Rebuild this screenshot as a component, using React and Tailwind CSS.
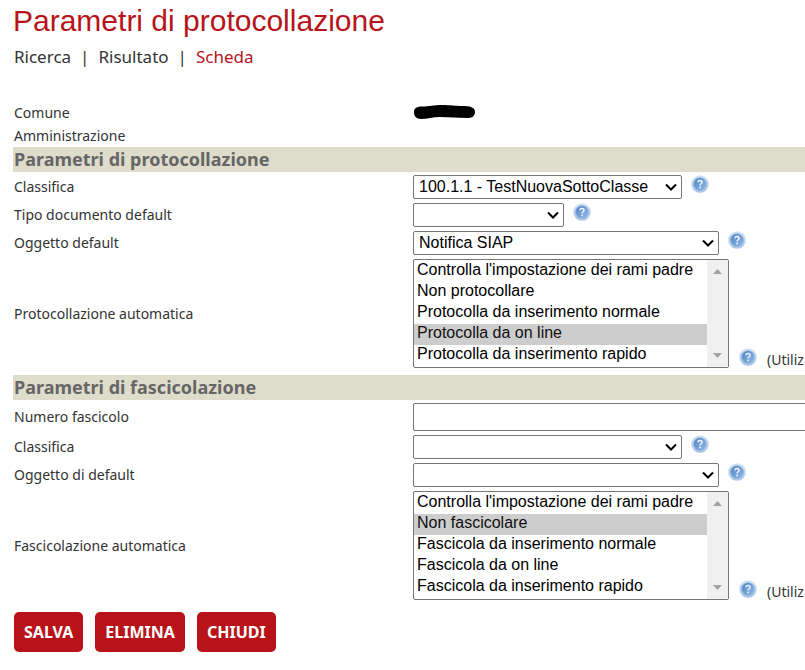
import React from "react";

const AUTO_PROTOCOLLO = [
  "Controlla l'impostazione dei rami padre",
  "Non protocollare",
  "Protocolla da inserimento normale",
  "Protocolla da on line",
  "Protocolla da inserimento rapido",
];

const AUTO_FASCICOLO = [
  "Controlla l'impostazione dei rami padre",
  "Non fascicolare",
  "Fascicola da inserimento normale",
  "Fascicola da on line",
  "Fascicola da inserimento rapido",
];

function HelpIcon() {
  return (
    <svg className="h-[18px] w-[18px] shrink-0" viewBox="0 0 18 18" role="img" aria-label="Aiuto">
      <defs>
        <linearGradient id="helpRing" x1="0" y1="0" x2="0" y2="1">
          <stop offset="0" stopColor="#d6e4f5" />
          <stop offset="1" stopColor="#a9c4e6" />
        </linearGradient>
        <linearGradient id="helpDisc" x1="0" y1="0" x2="1" y2="1">
          <stop offset="0" stopColor="#4f83c2" />
          <stop offset="1" stopColor="#92bce6" />
        </linearGradient>
      </defs>
      <circle cx="9" cy="9" r="8.8" fill="url(#helpRing)" />
      <circle cx="9" cy="9" r="6.3" fill="url(#helpDisc)" stroke="#7ba4d6" strokeWidth="0.6" />
      <path d="M7 7.300C7 4.800 11.100 4.800 11.100 7.200C11.100 8.700 9.100 8.800 9.100 10.400" fill="none" stroke="#f4f8fd" strokeWidth="1.5" />
      <circle cx="9.1" cy="12.4" r="0.9" fill="#f4f8fd" />
    </svg>
  );
}

function Row({ id, label, children }) {
  return (
    <div className="flex min-h-7 items-center py-0.5">
      <div className="w-[400px] shrink-0 pl-px">
        <label htmlFor={id}>{label}</label>
      </div>
      <div className="flex min-w-0 flex-1">{children}</div>
    </div>
  );
}

function SelectRow({ id, label, width, value }) {
  return (
    <Row id={id} label={label}>
      <div className="flex items-start gap-[9px]">
        <div className="relative">
          <select
            id={id}
            defaultValue={value}
            className={`block h-6 appearance-none rounded-xs border border-[#767676] bg-white pr-6 pb-px pl-[5px] font-['Liberation_Sans',Arial,sans-serif] text-base leading-5 text-black ${width}`}
          >
            <option value={value}>{value}</option>
          </select>
          <svg className="pointer-events-none absolute top-2 right-[5px] h-2 w-3" viewBox="0 0 12 8" aria-hidden="true">
            <path d="M1 1.500L6 6.500L11 1.500" fill="none" stroke="#000" strokeWidth="2" />
          </svg>
        </div>
        <HelpIcon />
      </div>
    </Row>
  );
}

function ListRow({ id, label, options, value }) {
  return (
    <Row id={id} label={label}>
      <div className="flex items-end gap-2.5">
        <div className="relative">
          <select
            id={id}
            size={5}
            defaultValue={value}
            className="block h-[109px] w-[316px] overflow-hidden rounded-xs border border-[#767676] bg-white px-0 pt-px pb-0 font-['Liberation_Sans',Arial,sans-serif] text-base text-black"
          >
            {options.map((o) => (
              <option
                key={o}
                value={o}
                className="h-[21px] min-h-0 px-[3px] py-0 leading-[20px] checked:bg-[#cdcdcd] checked:bg-linear-to-r checked:from-[#cdcdcd] checked:to-[#cdcdcd]"
              >
                {o}
              </option>
            ))}
          </select>
          <div className="pointer-events-none absolute inset-y-px right-px flex w-[21px] flex-col items-center justify-between bg-[#f0f0f0] py-[9px]">
            <svg className="h-[5px] w-[9px]" viewBox="0 0 9 5" aria-hidden="true">
              <path d="M0 5L4.500 0L9 5Z" fill="#a3a3a3" />
            </svg>
            <svg className="h-[5px] w-[9px]" viewBox="0 0 9 5" aria-hidden="true">
              <path d="M0 0L4.500 5L9 0Z" fill="#a3a3a3" />
            </svg>
          </div>
        </div>
        <div className="flex items-start gap-2.5">
          <HelpIcon />
          <span className="pt-1 leading-4 whitespace-nowrap">(Utiliz</span>
        </div>
      </div>
    </Row>
  );
}

function SectionTitle({ children }) {
  return (
    <h2 className="mb-px bg-[#deddcb] pl-px text-lg leading-[25px] font-bold text-[#666]">{children}</h2>
  );
}

function ActionButton({ children }) {
  return (
    <button type="button" className="h-10 rounded-[5px] bg-[#b71319] px-2.5 text-base font-bold text-white">
      {children}
    </button>
  );
}

export default function App() {
  return (
    <main className="min-h-screen overflow-hidden bg-white pl-[13px] font-['Noto_Sans',Tahoma,sans-serif] text-sm text-[#333]">
      <h1 className="pt-0.5 font-['Liberation_Sans',Arial,sans-serif] text-[30px] leading-[38px] text-[#b71319]">
        Parametri di protocollazione
      </h1>
      <nav className="flex gap-[9px] pt-1 pl-px text-[17px] leading-[26px]">
        <a href="#ricerca">Ricerca</a>
        <span>|</span>
        <a href="#risultato">Risultato</a>
        <span>|</span>
        <a href="#scheda" className="text-[#b71319]">Scheda</a>
      </nav>

      <dl className="pt-[31px] leading-[23px]">
        <div className="flex">
          <dt className="w-[400px] shrink-0 pl-px">Comune</dt>
          <dd>
            <svg className="mt-[3px] h-4 w-16" viewBox="0 0 64 16" aria-hidden="true">
              <path d="M1 8C1 4 4 2.500 9 2.500C16 2.500 21 1 29 1C38 1 42 2 49 2C57 2 62 3 62 8C62 13 58 14 54 14C45 14 36 13 27 13C20 13 14 15 8 15C3 15 1 12 1 8Z" fill="#000" />
            </svg>
          </dd>
        </div>
        <div className="flex">
          <dt className="w-[400px] shrink-0 pl-px">Amministrazione</dt>
          <dd />
        </div>
      </dl>

      <form onSubmit={(e) => e.preventDefault()}>
        <section className="pb-[5px]">
          <SectionTitle>Parametri di protocollazione</SectionTitle>
          <SelectRow id="p-classifica" label="Classifica" width="w-[269px]" value="100.1.1 - TestNuovaSottoClasse" />
          <SelectRow id="p-tipo" label="Tipo documento default" width="w-[151px]" value="" />
          <SelectRow id="p-oggetto" label="Oggetto default" width="w-[306px]" value="Notifica SIAP" />
          <ListRow id="p-auto" label="Protocollazione automatica" options={AUTO_PROTOCOLLO} value="Protocolla da on line" />
        </section>

        <section>
          <SectionTitle>Parametri di fascicolazione</SectionTitle>
          <Row id="f-numero" label="Numero fascicolo">
            <input id="f-numero" type="text" className="-mr-1 h-7 flex-1 rounded-xs border border-[#767676] bg-white px-1" />
          </Row>
          <SelectRow id="f-classifica" label="Classifica" width="w-[269px]" value="" />
          <SelectRow id="f-oggetto" label="Oggetto di default" width="w-[306px]" value="" />
          <ListRow id="f-auto" label="Fascicolazione automatica" options={AUTO_FASCICOLO} value="Non fascicolare" />
        </section>

        <div className="flex gap-3 pt-2.5 pl-px">
          <ActionButton>SALVA</ActionButton>
          <ActionButton>ELIMINA</ActionButton>
          <ActionButton>CHIUDI</ActionButton>
        </div>
      </form>
    </main>
  );
}
